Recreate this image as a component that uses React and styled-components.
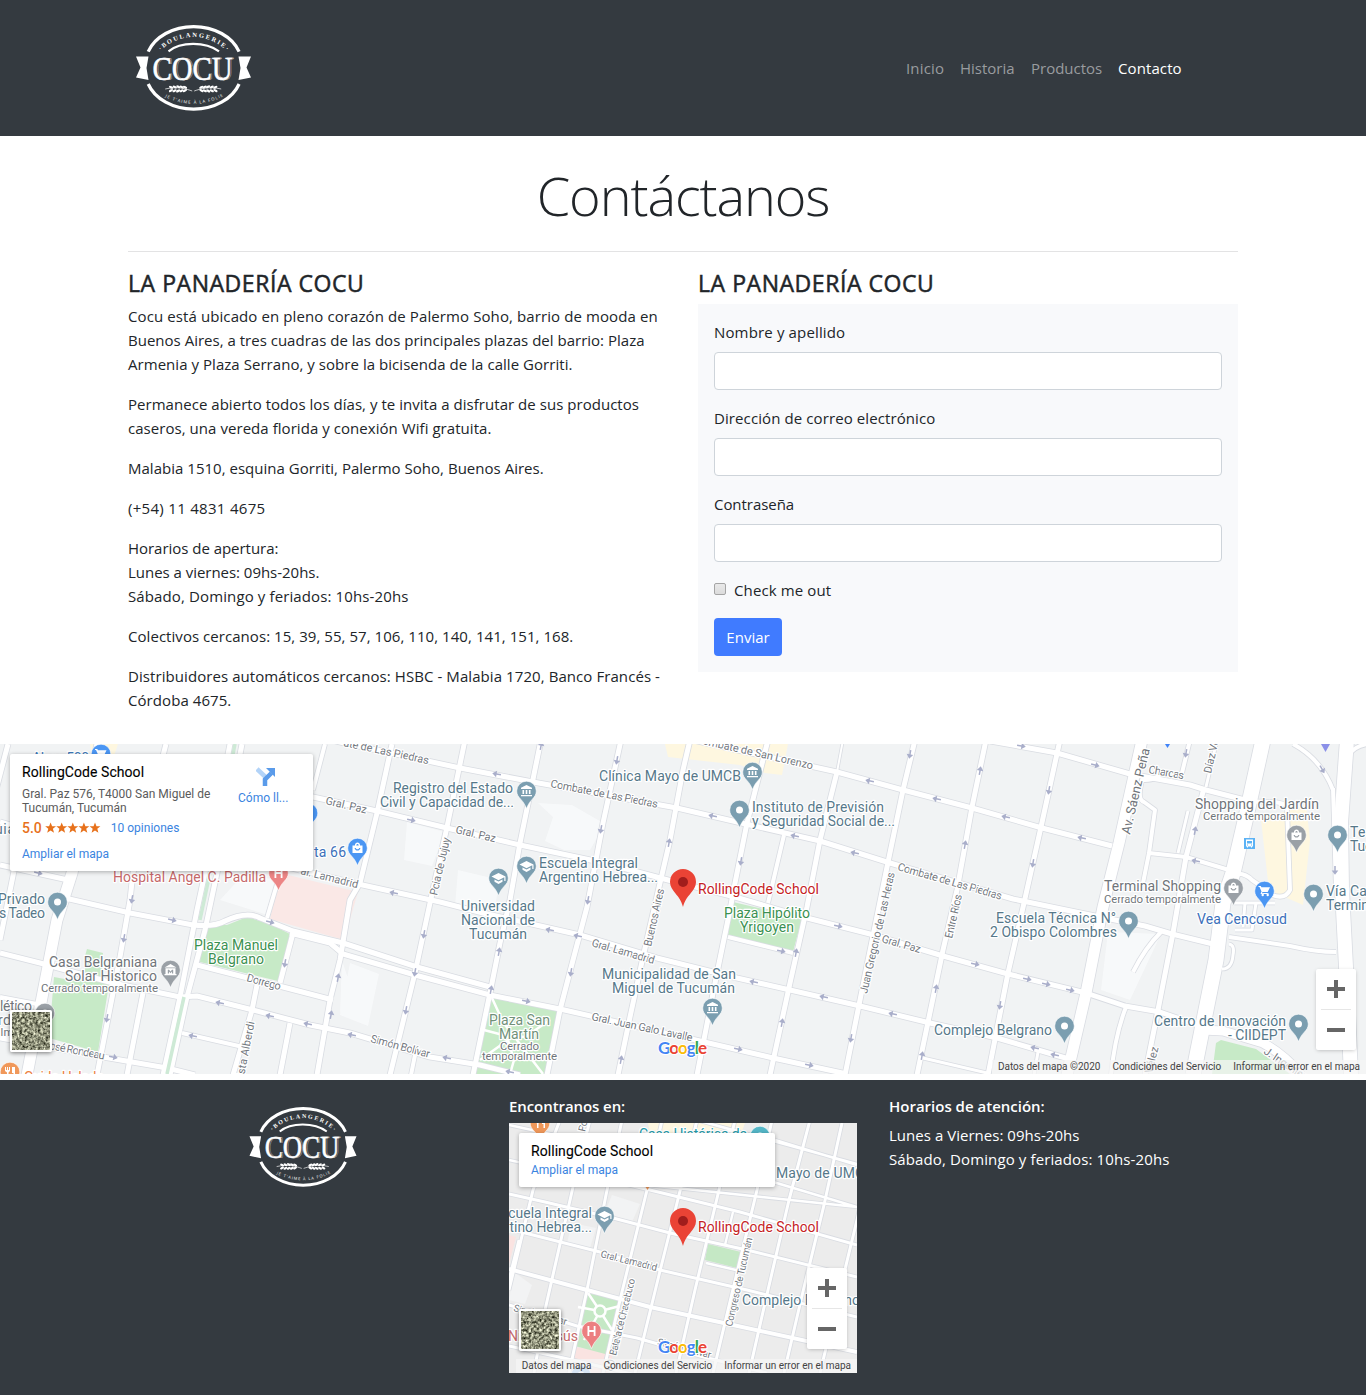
import React from "react";
import styled, { createGlobalStyle, css } from "styled-components";

const GlobalStyle = createGlobalStyle`
  *, *::before, *::after { box-sizing: border-box; }
  body {
    margin: 0;
    background: #fff;
    color: #212529;
    font-family: "Open Sans", "Noto Sans", sans-serif;
    font-size: 15px;
    line-height: 24px;
  }
`;

const Header = styled.header`
  height: 136px;
  background: #343a40;
  display: flex;
  justify-content: center;
`;
const HeaderInner = styled.div`
  width: 1110px;
  padding: 24px 48px 0 7px;
  display: flex;
  justify-content: space-between;
  align-items: flex-start;
`;
const Nav = styled.nav`
  display: flex;
  gap: 16px;
  padding: 32px 8px 0 0;
`;
const NavLink = styled.a`
  width: ${(p) => p.$w}px;
  white-space: nowrap;
  letter-spacing: ${(p) => p.$ls || 0}px;
  color: ${(p) => (p.$active ? "#fff" : "#999c9f")};
`;

const Container = styled.main`
  width: 1110px;
  margin: 0 auto;
  height: 608px;
  padding-top: 24px;
`;
const Title = styled.h1`
  margin: 0;
  height: 91px;
  padding-top: 2px;
  font-weight: 300;
  font-size: 54px;
  line-height: 67px;
  letter-spacing: -1.1px;
  text-align: center;
`;
const Columns = styled.div`
  display: flex;
  gap: 30px;
  border-top: 1px solid #e3e3e4;
  padding-top: 16px;
`;
const Column = styled.section`
  width: 540px;
`;
const Heading = styled.h2`
  margin: 0 0 8px;
  height: 28px;
  line-height: 30px;
  font-size: 23px;
  font-weight: 400;
  -webkit-text-stroke: 0.5px #212529;
  letter-spacing: 0.55px;
`;
const Paragraph = styled.p`
  margin: 0 0 16px;
  white-space: nowrap;
`;
const Line = styled.span`
  display: block;
  letter-spacing: ${(p) => p.$ls || 0}px;
`;
const Form = styled.form`
  background: #f8f9fb;
  padding: 16px;
  height: 368px;
`;
const Field = styled.label`
  display: block;
  margin-bottom: 16px;
`;
const FieldName = styled.span`
  display: block;
  margin-bottom: 8px;
  letter-spacing: ${(p) => p.$ls || 0}px;
`;
const Input = styled.input`
  display: block;
  width: 100%;
  height: 38px;
  border: 1px solid #ced4da;
  border-radius: 4px;
  background: #fff;
  padding: 6px 12px;
`;
const CheckRow = styled.label`
  display: flex;
  gap: 8px;
  height: 24px;
  margin-bottom: 16px;
  letter-spacing: 0.12px;
`;
const CheckBox = styled.input`
  appearance: none;
  width: 12px;
  height: 12px;
  margin: 5px 0 0;
  border: 1px solid #a5a5a5;
  border-radius: 2px;
  background: linear-gradient(#e9e9e9, #dcdcdc);
`;
const Submit = styled.button`
  width: 68px;
  height: 38px;
  border: 0;
  border-radius: 4px;
  padding: 0;
  background: #407bff;
  color: #fff;
  font: inherit;
`;

const MapFrame = styled.div`
  position: relative;
  overflow: hidden;
  width: ${(p) => p.$w}px;
  height: ${(p) => p.$h}px;
  font-family: Roboto, sans-serif;
`;
const MapSvg = styled.svg`
  display: block;
`;
const PlaceCard = styled.div`
  position: absolute;
  left: 10px;
  top: 10px;
  width: ${(p) => p.$w}px;
  height: ${(p) => p.$h}px;
  padding: 9px 12px;
  background: #fff;
  border-radius: 2px;
  box-shadow: 0 1px 4px rgba(0, 0, 0, 0.3);
  display: flex;
  justify-content: space-between;
  font-size: 12px;
  line-height: 14px;
  color: #5b5b5b;
`;
const PlaceName = styled.div`
  font-size: 14px;
  line-height: 18px;
  letter-spacing: 0.06px;
  -webkit-text-stroke: 0.1px #000;
  color: #000;
`;
const Address = styled.div`
  margin-top: 6px;
  white-space: nowrap;
`;
const Rating = styled.div`
  display: flex;
  align-items: center;
  height: 16px;
  margin: 5px 0 11px;
  color: #e7711b;
`;
const Score = styled.b`
  font-size: 14px;
  font-weight: 500;
  margin-right: 3px;
`;
const Link = styled.a`
  color: #3a84df;
`;
const Reviews = styled(Link)`
  margin-left: 10px;
`;
const SmallLink = styled(Link)`
  display: block;
  margin-top: 3px;
`;
const Directions = styled.div`
  width: 50px;
  margin: 4px 13px 0 0;
  text-align: center;
  color: #3a84df;
  white-space: nowrap;
`;
const ZoomBox = styled.div`
  position: absolute;
  right: 10px;
  bottom: 24px;
  width: 40px;
  height: 81px;
  background: #fff;
  border-radius: 2px;
  box-shadow: 0 1px 4px -1px rgba(0, 0, 0, 0.3);
`;
const Thumb = styled.div`
  position: absolute;
  left: 10px;
  bottom: ${(p) => p.$bottom}px;
  width: 42px;
  height: 42px;
  border: 2px solid #fff;
  border-radius: 2px;
  box-shadow: 0 1px 4px rgba(0, 0, 0, 0.5);
  overflow: hidden;
`;
const Legal = styled.div`
  position: absolute;
  right: 0;
  bottom: 0;
  height: 14px;
  padding: 0 6px;
  display: flex;
  gap: 12px;
  background: rgba(245, 245, 245, 0.72);
  color: #444;
  font-size: 10px;
  line-height: 14px;
  white-space: nowrap;
`;
const LegalItem = styled.span`
  letter-spacing: 0;
`;

const Footer = styled.footer`
  margin-top: 6px;
  height: 315px;
  background: #343a40;
  color: #fff;
  display: flex;
  justify-content: center;
`;
const FooterInner = styled.div`
  width: 1110px;
  display: flex;
`;
const FooterCol = styled.div`
  width: ${(p) => p.$w}px;
  padding-top: ${(p) => p.$top}px;
  ${(p) => p.$indent && css`padding-left: ${p.$indent}px;`}
`;
const FooterTitle = styled.div`
  font-weight: 600;
  height: ${(p) => p.$h}px;
  letter-spacing: ${(p) => p.$ls || 0}px;
`;

function Wheat({ flip }) {
  const grains = [0, 1, 2, 3, 4];
  return (
    <g transform={`translate(57.7 65) scale(${flip ? -1 : 1} 1)`} stroke="#fff" fill="#fff">
      <path d="M1 2 C7 0 15 -3 28 0" fill="none" strokeWidth=".7" />
      {grains.map((g) => (
        <g key={g} stroke="none">
          <ellipse cx={8 + g * 3.5} cy={-2.3 + Math.abs(g - 2) * 0.3} rx="2.3" ry="1.2" transform={`rotate(-28 ${8 + g * 3.5} -2)`} />
          <ellipse cx={8 + g * 3.5} cy={1.9 - Math.abs(g - 2) * 0.2} rx="2.3" ry="1.2" transform={`rotate(28 ${8 + g * 3.5} 2)`} />
        </g>
      ))}
    </g>
  );
}

function Logo({ id, width, height }) {
  return (
    <svg width={width} height={height} viewBox="0 0 116 88" style={{ display: "block" }}>
      <defs>
        <path id={id + "t"} d="M24.500 27.500 A46 46 0 0 1 91.500 27.500" />
        <path id={id + "b"} d="M27 71.500 A62 62 0 0 0 89 71.500" />
      </defs>
      <g fill="none" stroke="#fff">
        <path d="M12.7 27.7 A48 37 0 0 1 103.6 27.7" strokeWidth="3.2" />
        <path d="M12.7 60 A48 37 0 0 0 103.6 60" strokeWidth="3.2" />
        <path d="M33 27.4 C45 17.4 70 17.4 83.5 27.4" strokeWidth="2.2" />
      </g>
      <path fill="#fff" d="M.5 32.5H13L11 44L13 56L.5 53.5L5 43.5Z M115.5 32.5H103L105 44L103 56L115.5 53.5L111 43.5Z" />
      <text x="17" y="55.5" textLength="80" lengthAdjust="spacingAndGlyphs" fontFamily="Liberation Serif, serif" fontSize="34" fill="#fff" stroke="#fff" strokeWidth=".5">COCU</text>
      <text x="18.6" y="56.3" textLength="80" lengthAdjust="spacingAndGlyphs" fontFamily="Liberation Serif, serif" fontSize="34" fill="none" stroke="#fff" strokeWidth=".3">COCU</text>
      <text fontFamily="Liberation Serif, serif" fontSize="6.4" fontWeight="700" fill="#fff">
        <textPath href={`#${id}t`} startOffset="1" textLength="73">·BOULANGERIE·</textPath>
      </text>
      <text fontFamily="Open Sans, sans-serif" fontSize="4.2" fill="#fff">
        <textPath href={`#${id}b`} startOffset="3" textLength="60">JE T'AIME À LA FOLIE</textPath>
      </text>
      <Wheat />
      <Wheat flip />
    </svg>
  );
}

const glyphs = {
  dot: <circle r="3.5" fill="#fff" />,
  bank: <path fill="#fff" d="M0-6L5.5-3.2V-2H-5.5V-3.2ZM-4-1h1.6v4H-4ZM-.8-1H.8v4H-.8ZM2.4-1H4v4H2.4ZM-5.5 4h11v1.3h-11Z" />,
  school: <path fill="#fff" d="M0-5L7-1.5V3H5.8V-.8L0 2.2L-7-1.5ZM-4 1.5L0 3.6L4 1.5V3.8L0 6L-4 3.8Z" />,
  museum: <path fill="#fff" fillRule="evenodd" d="M0-6L6-2.5H-6ZM-5-1.7H5V4H6V5.3H-6V4H-5ZM-2.700 3.500H-1.500V1.600L0 3.200L1.500 1.600V3.500H2.700V-.3H1.500L0 1.600L-1.500-.3H-2.700Z" />,
  bag: <path fill="#fff" fillRule="evenodd" d="M-5-2.5H-2.6C-2.6-6.6 2.6-6.6 2.6-2.5H5V5H-5ZM-1.3-2.5H1.3C1.1-4.6-1.1-4.6-1.3-2.5ZM-3 0C-2 3.4 2 3.4 3 0H1.8C1.2 1.8-1.2 1.8-1.8 0Z" />,
  cart: <path fill="#fff" d="M-6-5H-3.7L-3.1-3.7H5.5L3.2 1H-2L-2.5 2H4V3.1H-4L-3 .6L-5-3.9H-6ZM-3 4a1.2 1.2 0 1 0 2.4 0a1.2 1.2 0 1 0-2.4 0M2 4a1.2 1.2 0 1 0 2.4 0a1.2 1.2 0 1 0-2.4 0" />,
  hospital: <path fill="#fff" d="M-4-5H-2.2V-.9H2.2V-5H4V5H2.2V.9H-2.2V5H-4Z" />,
  food: <path fill="#fff" d="M-5-5h1v3h1v-3h1v3h1v-3h1v4l-1.5 1.5V5h-1.5V.5L-5-1ZM2-5H5V5H3.5V1H2Z" />,
};

function Pin({ x, y, color = "#7b9eb0", icon = "dot" }) {
  return (
    <g transform={`translate(${x} ${y})`}>
      <path d="M-9.8 0A9.8 9.8 0 0 1 9.8 0C9.8 3.4 8.2 5.7 5.8 8.2C3 11.2 1.7 13.4 0 17.6C-1.7 13.4-3 11.2-5.8 8.2C-8.2 5.7-9.8 3.4-9.8 0Z" fill={color} stroke="#fff" strokeWidth=".6" />
      {glyphs[icon]}
    </g>
  );
}

function MainPin({ x, y }) {
  return (
    <g transform={`translate(${x} ${y})`}>
      <path d="M-13 0A13 13 0 0 1 13 0C13 4.5 10.5 7.8 7.5 11.5C4.3 15.4 1.7 18.6 0 25C-1.7 18.6-4.3 15.4-7.5 11.5C-10.5 7.8-13 4.5-13 0Z" fill="#ea4335" />
      <circle r="5" fill="#a11d1c" />
    </g>
  );
}

function Label({ x, y, w, a, size = 14, color = "#56788a", anchor = "start", children, halo = "#fff" }) {
  return (
    <text x={x} y={y} fontSize={size} fill={color} textAnchor={anchor} textLength={w}
      transform={a ? `rotate(${a} ${x} ${y})` : undefined}
      textRendering={a ? "geometricPrecision" : undefined}
      stroke={halo} strokeWidth="2.4" strokeLinejoin="round" paintOrder="stroke">
      {children}
    </text>
  );
}

function Roads({ roads }) {
  return (
    <g fill="none" strokeLinejoin="round">
      {roads.map(([w, d], i) => <path key={"c" + i} d={d} stroke="#d9dce2" strokeWidth={w + 1.6} />)}
      {roads.map(([w, d], i) => <path key={"r" + i} d={d} stroke="#fff" strokeWidth={w} />)}
    </g>
  );
}

function Arrows({ items }) {
  return (
    <g stroke="#a9aeca" strokeWidth="1.5" fill="#a9aeca">
      {items.map(([x, y, r], i) => (
        <g key={i} transform={`translate(${x} ${y}) rotate(${r})`}>
          <path d="M-4 0H2" /><path stroke="none" d="M.4-3.300L4.800 0L.4 3.300Z" />
        </g>
      ))}
    </g>
  );
}

function GoogleMark({ x, y }) {
  return (
    <text x={x} y={y} fontSize="17" fontWeight="700" fontFamily="Lato, sans-serif" textLength="49" stroke="#fff" strokeWidth="2" paintOrder="stroke">
      <tspan fill="#4285f4">G</tspan><tspan fill="#ea4335">o</tspan><tspan fill="#fbbc05">o</tspan>
      <tspan fill="#4285f4">g</tspan><tspan fill="#34a853">l</tspan><tspan fill="#ea4335">e</tspan>
    </text>
  );
}

const cityRoads = [
  [5, "M310 735L340 742L460 768L533 782L677 808L750 825L820 841L890 863L1013 899L1100 917L1145 926L1172 934L1213 944"],
  [5, "M670 735L837 772L903 790L972 808L1042 828L1112 846"],
  [5, "M990 741L1057 753L1130 774L1190 785L1206 790L1245 800"],
  [5, "M200 770L313 797L377 811L447 828L520 845L600 862L668 880L735 897L807 918L870 934L943 956L1008 974L1086 993L1125 1006L1160 1012L1200 1026"],
  [5, "M200 846L358 884L440 902L483 913L580 935L657 958L737 978L790 990L860 1006L930 1023L997 1038L1069 1059"],
  [5, "M0 865L68 880M65 898L130 913L193 925Q215 927 225 921Q247 911 260 918L293 931L343 943L417 967L490 987"],
  [5, "M290 933L330 943L343 954L415 975L490 995L560 1009L700 1041L773 1058L847 1074"],
  [5, "M0 953L40 963L113 983L180 997L197 996L253 1010L310 1025L350 1033L430 1057L480 1065L520 1075"],
  [5, "M197 965L283 987L333 1000"],
  [5, "M0 1038L103 1057L167 1068L195 1075"],
  [4, "M182 1033L243 1047"],
  [4, "M0 997L37 1004"],
  [5, "M8 744L-4 790M0 822L10 825M14 871L0 940"],
  [11, "M100 744L72 873L57 920L27 1075"],
  [5, "M166 744L133 873L130 900L120 957L97 1075"],
  [5, "M143 993L127 1075"],
  [5, "M230 744L205 873L197 910L180 997L163 1075"],
  [5, "M242 744L217 873L205 930L187 997L170 1075"],
  [5, "M293 933L280 983M257 985L252 1010L233 1075M290 1023L280 1075"],
  [5, "M392 744L377 813L360 883L350 900L340 960L330 1000L317 1075"],
  [4, "M325 744L313 790M280 874L267 918"],
  [5, "M465 740L447 827L430 903L415 973L390 1075"],
  [4, "M415 1055L411 1075"],
  [5, "M541 740L520 843L510 900L500 943L490 993L473 1075"],
  [5, "M621 740L603 823L587 907L573 960L560 1010L547 1075"],
  [5, "M690 740L683 770L670 840L660 883L643 957L630 1017L618 1075"],
  [5, "M768 740L747 823L735 883L730 910L717 973L697 1075"],
  [4, "M784 835L768 903M728 937L793 953"],
  [2, "M843 740L837 772"],
  [5, "M837 772L820 840L807 907L790 983L770 1075"],
  [5, "M915 740L903 790L887 867L860 1000L845 1075"],
  [5, "M986 740L972 807L957 890L943 950L917 1075"],
  [5, "M1060 740L1041 827L1024 903L1008 973L988 1075"],
  [11, "M1142 740L1119 843L1103 907L1086 993L1067 1075"],
  [4, "M1190 740L1181 777M1163 770Q1158 781 1142 780Q1137 800 1144 802L1155 810L1149 853L1143 883M1149 853L1186 857L1229 870M1237 874Q1245 873 1252 880L1265 889"],
  [5, "M1204 788L1186 857L1173 933L1158 1010L1145 1075"],
  [3, "M1188 811L1178 853M1217 740L1206 787"],
  [15, "M1263 740L1246 817L1233 873L1223 903L1216 960L1196 1060L1193 1075"],
  [4, "M1293 744Q1321 759 1333 790"],
  [14, "M1347 740L1341 823L1342 890L1346 967L1351 1075"],
  [4, "M1333 788L1336 890M1348 756Q1354 746 1368 744"],
  [4, "M1229 937L1290 946Q1316 952 1336 952"],
  [9, "M1203 1030L1223 1031L1263 1043Q1285 1055 1301 1075"],
  [4, "M1126 1007Q1115 1035 1111 1075M1161 932Q1145 948 1133 972"],
  [3, "M1038 1052L1034 1075M923 1058L987 1073"],
  [3, "M1229 944Q1235 945 1233 955Q1232 969 1222 969M1232 903H1275M1235 930H1252L1256 903M1245 903L1243 927"],
  [4, "M1246 802Q1288 800 1287 808L1290 890Q1285 900 1272 895"],
];

const cityArrows = [
  [38, 873, 13], [132, 899, 100], [172, 920, 13], [124, 938, 100], [107, 1018, 100], [270, 922, 15], [285, 963, 100],
  [338, 978, -80], [331, 1015, -80], [220, 1003, 192], [270, 1016, 192], [308, 1024, 192], [193, 1036, 192], [113, 1057, 12],
  [497, 774, 190], [411, 820, 12], [394, 893, 192], [424, 934, 100], [415, 972, 100], [406, 1010, 100], [352, 1035, 192],
  [447, 1058, 192], [541, 746, -80], [617, 760, 100], [601, 829, 100], [588, 900, 100], [571, 972, 100], [550, 930, 192],
  [578, 936, 192], [499, 952, -80], [491, 990, -80], [526, 1001, 12], [510, 1072, 192], [669, 843, -80], [621, 1060, -80],
  [713, 816, 192], [795, 836, 192], [855, 853, 192], [870, 781, 192], [937, 799, 192], [1006, 817, 192], [741, 861, 100],
  [910, 754, 100], [980, 771, -80], [965, 845, -80], [838, 926, 12], [781, 951, 12], [796, 953, -80], [754, 982, 192],
  [824, 997, 192], [893, 1014, 192], [936, 989, -80], [975, 964, 12], [782, 1023, -80], [851, 1038, 100], [738, 1049, 12],
  [809, 1065, 12], [922, 1056, -80], [1000, 1005, 100], [1027, 979, 12], [1021, 746, 10], [1095, 765, 15], [1049, 790, 100],
  [1082, 838, 192], [1033, 863, 100], [1186, 753, 100], [1322, 769, 60], [1195, 831, -80], [1196, 861, 192], [1335, 870, 90],
  [1046, 984, 12], [1070, 990, 12], [1035, 1048, 192], [1055, 1055, 192],
];

const grey = "#70757a";
const street = "#74797f";

function CityMap() {
  return (
    <MapSvg width="1366" height="330" viewBox="0 744 1366 330">
      <rect y="744" width="1366" height="330" fill="#f1f3f4" />
      <path fill="#f9fafb" d="M407 822L445 832L432 866L404 860ZM458 870L500 880L495 906H455ZM538 803L572 805L605 824L590 850L564 850L545 841L553 817ZM350 963L379 974L368 1026L340 1015ZM1108 932L1161 934L1130 1000L1101 990ZM243 875L279 880L268 915L220 900ZM342 960L350 985L340 1013Z" opacity=".8" />
      <path fill="#fae8e6" d="M280 873L358 892L344 940L270 919Z" />
      <path fill="#c7eac7" d="M203 923L227 925L247 917L270 924L290 934L278 981L200 962ZM54 977L75 981L85 972V956L87 949L103 953L101 980L109 984L98 1052L49 1038ZM492 997L557 1011L545 1074H476ZM733 902L802 918L793 952L728 935ZM1216 1043L1221 1040L1256 1049L1290 1074H1212Z" />
      <path fill="#fef7e0" d="M665 744H788L782 775L765 773L740 765L668 757ZM90 744H118L112 762L92 756ZM1261 820L1306 804L1310 840L1303 905L1269 890Z" />
      <Roads roads={cityRoads} />
      <path d="M235 744L210 873L200 920M184 997L167 1074" stroke="#ceead6" strokeWidth="3.5" fill="none" />
      <path d="M492 998L503 1022L543 1074M484 1030L503 1035L525 1037L550 1020M480 1060L508 1040L514 1060L510 1074" stroke="#fff" strokeWidth="2.5" fill="none" />
      <Arrows items={cityArrows} />

      <Label x="343" y="746" w="87" a="12" size="11" color={street}>ate de Las Piedras</Label>
      <Label x="550" y="787" w="109" a="11" size="11" color={street}>Combate de Las Piedras</Label>
      <Label x="702" y="744" w="113" a="13" size="11" color={street}>ombate de San Lorenzo</Label>
      <Label x="897" y="870" w="108" a="16" size="11" color={street}>Combate de Las Piedras</Label>
      <Label x="325" y="804" w="42" a="13" size="11" color={street}>Gral. Paz</Label>
      <Label x="455" y="833" w="41" a="13" size="11" color={street}>Gral. Paz</Label>
      <Label x="881" y="942" w="40" a="16" size="11" color={street}>Gral. Paz</Label>
      <Label x="300" y="874" w="59" a="14" size="11" color={street}>al. Lamadrid</Label>
      <Label x="591" y="946" w="65" a="16" size="11" color={street}>Gral. Lamadrid</Label>
      <Label x="591" y="1020" w="103" a="12" size="11" color={street}>Gral. Juan Galo Lavalle</Label>
      <Label x="370" y="1042" w="61" a="15" size="11" color={street}>Simón Bolívar</Label>
      <Label x="246" y="981" w="35" a="15" size="11" color={street}>Dorrego</Label>
      <Label x="49" y="1049" w="56" a="11" size="11" color={street}>osé Rondeau</Label>
      <Label x="1148" y="773" w="36" a="10" size="11" color={street}>Charcas</Label>
      <Label x="437" y="896" w="59" a="-77" size="11" color={street}>Pcia de Jujuy</Label>
      <Label x="651" y="947" w="59" a="-77" size="11" color={street}>Buenos Aires</Label>
      <Label x="867" y="994" w="124" a="-77" size="11" color={street}>Juan Gregorio de Las Heras</Label>
      <Label x="952" y="939" w="45" a="-77" size="11" color={street}>Entre Ríos</Label>
      <Label x="1211" y="774" w="48" a="-77" size="11" color={street}>Díaz Vélez</Label>
      <Label x="242" y="1087" w="66" a="-79" size="11" color={street}>utista Alberdi</Label>
      <Label x="1152" y="1074" w="27" a="-76" size="11" color={street}>Vélez</Label>
      <Label x="1263" y="1053" w="60" a="34" size="11" color={street}>J. Ingenieros</Label>
      <Label x="1130" y="835" w="88" a="-77" size="13" color={grey}>Av. Sáenz Peña</Label>

      <Pin x={101} y={754} color="#4b96f3" icon="cart" />
      <Label x="32" y="763" w="57" color="#3c78b8">Alpro 500</Label>
      <Pin x={308} y={813} color="#4b96f3" />
      <Pin x={357.5} y={848} color="#4b96f3" icon="bag" />
      <Label x="314" y="857" w="32" color="#3c70ba">ta 66</Label>
      <Pin x={278.5} y={873} color="#ec8585" icon="hospital" />
      <Label x="113" y="882" w="153" color="#c5686a">Hospital Ángel C. Padilla</Label>
      <Pin x={57.5} y={902} />
      <Label x="-2" y="904" w="47">Privado</Label>
      <Label x="45" y="918" w="53" anchor="end">as Tadeo</Label>
      <Label x="-5" y="834" w="20">uia</Label>
      <Label x="194" y="950" w="84" color="#3b9151">Plaza Manuel</Label>
      <Label x="208" y="964" w="56" color="#3b9151">Belgrano</Label>
      <Pin x={170.5} y={970} color="#9aa0a6" icon="museum" />
      <Label x="49" y="967" w="108" color={grey}>Casa Belgraniana</Label>
      <Label x="65" y="981" w="92" color={grey}>Solar Historico</Label>
      <Label x="41" y="992" w="117" size="11.5" color={grey}>Cerrado temporalmente</Label>
      <Pin x={45} y={1013} color="#9aa0a6" />
      <Label x="0" y="1011" w="32" color={grey}>lético</Label>
      <Label x="-10" y="1025" w="33" color={grey}>ardín</Label>
      <Label x="-6" y="1036" w="26" size="11.5" color={grey}>alme</Label>
      <Pin x={10} y={1072} color="#f0985a" icon="food" />
      <Label x="24" y="1082" w="80" color="#ec8040">Guido Helado</Label>

      <Pin x={526.5} y={791} icon="bank" />
      <Label x="393" y="793" w="120">Registro del Estado</Label>
      <Label x="380" y="807" w="134">Civil y Capacidad de...</Label>
      <Pin x={526.5} y={866} icon="school" />
      <Label x="539" y="868" w="99">Escuela Integral</Label>
      <Label x="539" y="882" w="119">Argentino Hebrea...</Label>
      <Pin x={498.5} y={878} icon="school" />
      <Label x="461" y="911" w="74">Universidad</Label>
      <Label x="461" y="925" w="74">Nacional de</Label>
      <Label x="469" y="939" w="58">Tucumán</Label>
      <Pin x={752.5} y={772} icon="bank" />
      <Label x="599" y="781" w="142">Clínica Mayo de UMCB</Label>
      <Pin x={739.5} y={810} />
      <Label x="752" y="812" w="132">Instituto de Previsión</Label>
      <Label x="752" y="826" w="143">y Seguridad Social de...</Label>
      <MainPin x={683} y={882} />
      <Label x="698" y="894" w="121" color="#c5221f">RollingCode School</Label>
      <Label x="724" y="918" w="86" color="#3b9151">Plaza Hipólito</Label>
      <Label x="740" y="932" w="54" color="#3b9151">Yrigoyen</Label>
      <Label x="602" y="979" w="134">Municipalidad de San</Label>
      <Label x="612" y="993" w="123">Miguel de Tucumán</Label>
      <Pin x={712.5} y={1008} icon="bank" />
      <Label x="489" y="1025" w="61" color="#70917a">Plaza San</Label>
      <Label x="499" y="1039" w="40" color="#70917a">Martín</Label>
      <Label x="500" y="1050" w="39" size="11.5" color={grey}>Cerrado</Label>
      <Label x="482" y="1060" w="75" size="11.5" color={grey}>temporalmente</Label>

      <Label x="1195" y="809" w="124" color={grey}>Shopping del Jardín</Label>
      <Label x="1203" y="820" w="117" size="11.5" color={grey}>Cerrado temporalmente</Label>
      <Pin x={1296.5} y={835} color="#9aa0a6" icon="bag" />
      <Pin x={1337.5} y={835} />
      <Label x="1350" y="837" w="41">Teatro</Label>
      <Label x="1350" y="851" w="57">Tucumán</Label>
      <rect x="1244" y="838" width="11" height="11" fill="#5bb2f5" />
      <path fill="#fff" fillRule="evenodd" d="M1246 839.500H1253V846.500H1252V847.500H1251V846.500H1248V847.500H1247V846.500H1246ZM1247 841V843.500H1252V841ZM1247 844.500V845.500H1248V844.500ZM1251 844.500V845.500H1252V844.500Z" />
      <Label x="1104" y="891" w="117" color={grey}>Terminal Shopping</Label>
      <Label x="1104" y="903" w="117" size="11.5" color={grey}>Cerrado temporalmente</Label>
      <Pin x={1233.5} y={888} color="#9aa0a6" icon="bag" />
      <Pin x={1264.5} y={891} color="#4b96f3" icon="cart" />
      <Label x="1197" y="924" w="90" color="#3c70ba">Vea Cencosud</Label>
      <Pin x={1313.5} y={894} />
      <Label x="1326" y="896" w="60">Vía Canal</Label>
      <Label x="1326" y="910" w="54">Terminal</Label>
      <Label x="996" y="923" w="120">Escuela Técnica N°</Label>
      <Label x="990" y="937" w="127">2 Obispo Colombres</Label>
      <Pin x={1128.5} y={921} />
      <Label x="934" y="1035" w="118">Complejo Belgrano</Label>
      <Pin x={1064.5} y={1026} />
      <Label x="1154" y="1026" w="132">Centro de Innovación</Label>
      <Label x="1228" y="1040" w="58">- CIIDEPT</Label>
      <Pin x={1298.5} y={1024} />
      <path d="M1321 744H1330L1325.500 752Z" fill="#8b90e8" />
      <path d="M1165 744H1170L1167.500 748Z" fill="#3f83f8" />
      <GoogleMark x={658} y={1054} />
    </MapSvg>
  );
}

const smallRoads = [
  [2.6, "M509 1125L600 1145L740 1130M775 1140L857 1165M700 1121L857 1164"],
  [2.6, "M509 1160L600 1180L857 1207M760 1178L857 1207"],
  [3, "M509 1194L545 1202L613 1218L670 1233L747 1250L857 1277"],
  [3, "M590 1176L650 1190L740 1212L857 1245"],
  [3, "M509 1229L600 1252L660 1270L747 1290L857 1317"],
  [4, "M509 1269L587 1290L650 1307L733 1325L857 1352"],
  [3, "M509 1305L577 1326L637 1338L700 1356L767 1373"],
  [3, "M509 1346L577 1361L640 1376"],
  [3, "M519 1240L504 1300M560 1120L533 1190L509 1290"],
  [3, "M590 1120L573 1187L545 1310L534 1373"],
  [3, "M622 1120L606 1195L587 1290L569 1373"],
  [3, "M662 1120L647 1190L620 1300L603 1373"],
  [3, "M697 1120L681 1187L660 1271L635 1373"],
  [3, "M735 1120L719 1190L695 1290L676 1373"],
  [3, "M772 1120L757 1190L728 1310L713 1373"],
  [3, "M810 1120L789 1200L768 1290L749 1373"],
  [3, "M842 1123L824 1205L801 1300L784 1373"],
  [3, "M866 1180L857 1220L840 1290L820 1373"],
  [2.4, "M733 1212L725 1245M706 1263L740 1271"],
];

function SmallMap() {
  return (
    <MapSvg width="348" height="250" viewBox="509 1123 348 250">
      <rect x="509" y="1123" width="348" height="250" fill="#ececec" />
      <path fill="#f2f3f4" d="M612 1195L640 1204L632 1222L604 1214ZM572 1223L596 1228L590 1248L567 1243ZM514 1272L532 1285L525 1304L509 1300Z" />
      <path fill="#fef7e0" d="M648 1123H745L741 1134H650Z" />
      <path fill="#fae3e1" d="M509 1235L516 1237L509 1264ZM575 1347L613 1353L608 1373H570Z" />
      <path fill="#c5e8c5" d="M587 1293L622 1300L609 1355L575 1346ZM708 1244L741 1252L737 1268L705 1260Z" />
      <Roads roads={smallRoads} />
      <path d="M588 1293L600 1311L620 1306M600 1311L578 1307M600 1311L612 1330M600 1311L584 1340" stroke="#fff" strokeWidth="2.5" fill="none" />
      <circle cx="600" cy="1311" r="5.500" fill="#c5e8c5" stroke="#fff" strokeWidth="2.5" />
      <Label x="600" y="1257" w="58" a="14" size="10" color={street}>Gral. Lamadrid</Label>
      <Label x="616" y="1356" w="79" a="-76" size="10" color={street}>Batalla de Chacabuco</Label>
      <Label x="612" y="1372" w="12" a="-76" size="10" color={street}>80</Label>
      <Label x="732" y="1327" w="91" a="-77" size="10" color={street}>Congreso de Tucumán</Label>
      <Label x="585" y="1132" w="20" a="-78" size="10" color={street}>Pozo</Label>
      <Label x="513" y="1311" w="55" a="15" size="10" color={street}>Simón Bolívar</Label>
      <Label x="657" y="1345" w="55" a="14" size="10" color={street}>Simón Bolívar</Label>
      <Pin x={540} y={1123} color="#f0985a" icon="food" />
      <Label x="639" y="1139" w="108" color="#249bab">Casa Histórica de</Label>
      <Pin x={760} y={1136} color="#54b6c7" />
      <path d="M645 1186H650L647.500 1190Z" fill="#f0985a" />
      <Label x="776" y="1178" w="97">Mayo de UMCB</Label>
      <Label x="592" y="1218" w="99" anchor="end">Escuela Integral</Label>
      <Label x="592" y="1232" w="119" anchor="end">Argentino Hebrea...</Label>
      <Pin x={604.5} y={1216} icon="school" />
      <MainPin x={683} y={1221} />
      <Label x="698" y="1232" w="121" color="#c5221f">RollingCode School</Label>
      <Label x="742" y="1305" w="118">Complejo Belgrano</Label>
      <Label x="508" y="1341" w="70" color="#c5686a">Niño Jesús</Label>
      <Pin x={591.5} y={1331} color="#ec7f80" icon="hospital" />
      <Pin x={581} y={1375} color="#8abaf0" />
      <GoogleMark x={658} y={1353} />
    </MapSvg>
  );
}

function Zoom() {
  return (
    <ZoomBox>
      <svg width="40" height="81">
        <path d="M11 20H29M20 11V29M11 61H29" stroke="#666" strokeWidth="4" />
        <path d="M5 40.5H35" stroke="#e6e6e6" />
      </svg>
    </ZoomBox>
  );
}

function Satellite({ id, bottom, seed }) {
  return (
    <Thumb $bottom={bottom}>
      <MapSvg width="38" height="38">
        <filter id={id} x="0" y="0" width="1" height="1" colorInterpolationFilters="sRGB">
          <feTurbulence type="fractalNoise" baseFrequency=".38" numOctaves="3" seed={seed} />
          <feColorMatrix values="1.3 .3 0 0 -.24  1.3 .3 0 0 -.23  1.2 .3 0 0 -.27  0 0 0 0 1" />
        </filter>
        <rect width="38" height="38" filter={`url(#${id})`} />
      </MapSvg>
    </Thumb>
  );
}

function Stars() {
  return (
    <svg width="56" height="12" fill="#e7711b">
      {[0, 1, 2, 3, 4].map((i) => (
        <path key={i} transform={`translate(${5.6 + i * 11.1} 6)`} d="M0-5.600L1.500-1.700L5.400-1.700L2.300 .8L3.400 4.800L0 2.500L-3.400 4.800L-2.300 .8L-5.400-1.700L-1.500-1.700Z" />
      ))}
    </svg>
  );
}

export default function App() {
  return (
    <>
      <GlobalStyle />
      <Header>
        <HeaderInner>
          <Logo id="top" width={117} height={88} />
          <Nav>
            <NavLink $w={38} $ls={0.15}>Inicio</NavLink>
            <NavLink $w={55}>Historia</NavLink>
            <NavLink $w={71}>Productos</NavLink>
            <NavLink $w={64} $ls={0.1} $active>Contacto</NavLink>
          </Nav>
        </HeaderInner>
      </Header>

      <Container>
        <Title>Contáctanos</Title>
        <Columns>
          <Column>
            <Heading>LA PANADERÍA COCU</Heading>
            <Paragraph>
              <Line $ls={0.1}>Cocu está ubicado en pleno corazón de Palermo Soho, barrio de mooda en</Line>
              <Line $ls={0.01}>Buenos Aires, a tres cuadras de las dos principales plazas del barrio: Plaza</Line>
              <Line $ls={0.045}>Armenia y Plaza Serrano, y sobre la bicisenda de la calle Gorriti.</Line>
            </Paragraph>
            <Paragraph>
              <Line $ls={0.035}>Permanece abierto todos los días, y te invita a disfrutar de sus productos</Line>
              <Line $ls={0.05}>caseros, una vereda florida y conexión Wifi gratuita.</Line>
            </Paragraph>
            <Paragraph><Line $ls={0.02}>Malabia 1510, esquina Gorriti, Palermo Soho, Buenos Aires.</Line></Paragraph>
            <Paragraph><Line $ls={0.3}>(+54) 11 4831 4675</Line></Paragraph>
            <Paragraph>
              <Line $ls={-0.03}>Horarios de apertura:</Line>
              <Line $ls={-0.03}>Lunes a viernes: 09hs-20hs.</Line>
              <Line $ls={0.12}>Sábado, Domingo y feriados: 10hs-20hs</Line>
            </Paragraph>
            <Paragraph><Line $ls={0.05}>Colectivos cercanos: 15, 39, 55, 57, 106, 110, 140, 141, 151, 168.</Line></Paragraph>
            <Paragraph>
              <Line $ls={0.075}>Distribuidores automáticos cercanos: HSBC - Malabia 1720, Banco Francés -</Line>
              <Line $ls={0.07}>Córdoba 4675.</Line>
            </Paragraph>
          </Column>
          <Column>
            <Heading>LA PANADERÍA COCU</Heading>
            <Form>
              <Field><FieldName $ls={0.15}>Nombre y apellido</FieldName><Input /></Field>
              <Field><FieldName $ls={0.1}>Dirección de correo electrónico</FieldName><Input /></Field>
              <Field><FieldName $ls={-0.05}>Contraseña</FieldName><Input type="password" /></Field>
              <CheckRow><CheckBox type="checkbox" />Check me out</CheckRow>
              <Submit type="button">Enviar</Submit>
            </Form>
          </Column>
        </Columns>
      </Container>

      <MapFrame $w={1366} $h={330}>
        <CityMap />
        <PlaceCard $w={303} $h={117}>
          <div>
            <PlaceName>RollingCode School</PlaceName>
            <Address>Gral. Paz 576, T4000 San Miguel de<br />Tucumán, Tucumán</Address>
            <Rating><Score>5.0</Score><Stars /><Reviews>10 opiniones</Reviews></Rating>
            <Link>Ampliar el mapa</Link>
          </div>
          <Directions>
            <svg width="20" height="20" viewBox="0 0 20 20" style={{ display: "block", margin: "0 auto 4px 18px" }}>
              <path d="M1 2L9.500 10" stroke="#b2d3f8" strokeWidth="4.500" />
              <path d="M9 19V12.500L15.500 6" stroke="#5a9bea" strokeWidth="4.500" fill="none" />
              <path d="M10 1H19V10Z" fill="#5a9bea" />
            </svg>
            Cómo ll...
          </Directions>
        </PlaceCard>
        <Satellite id="sat1" bottom={22} seed={4} />
        <Zoom />
        <Legal>
          <LegalItem>Datos del mapa ©2020</LegalItem>
          <LegalItem>Condiciones del Servicio</LegalItem>
          <LegalItem>Informar un error en el mapa</LegalItem>
        </Legal>
      </MapFrame>

      <Footer>
        <FooterInner>
          <FooterCol $w={381} $top={26} $indent={121}>
            <Logo id="bottom" width={108} height={82} />
          </FooterCol>
          <FooterCol $w={380} $top={14}>
            <FooterTitle $h={29} $ls={-0.08}>Encontranos en:</FooterTitle>
            <MapFrame $w={348} $h={250}>
              <SmallMap />
              <PlaceCard $w={256} $h={54}>
                <div>
                  <PlaceName>RollingCode School</PlaceName>
                  <SmallLink>Ampliar el mapa</SmallLink>
                </div>
              </PlaceCard>
              <Satellite id="sat2" bottom={22} seed={9} />
              <Zoom />
              <Legal>
                <LegalItem>Datos del mapa</LegalItem>
                <LegalItem>Condiciones del Servicio</LegalItem>
                <LegalItem>Informar un error en el mapa</LegalItem>
              </Legal>
            </MapFrame>
          </FooterCol>
          <FooterCol $w={349} $top={14}>
            <FooterTitle $h={29}>Horarios de atención:</FooterTitle>
            <Line $ls={0.03}>Lunes a Viernes: 09hs-20hs</Line>
            <Line $ls={0.12}>Sábado, Domingo y feriados: 10hs-20hs</Line>
          </FooterCol>
        </FooterInner>
      </Footer>
    </>
  );
}
